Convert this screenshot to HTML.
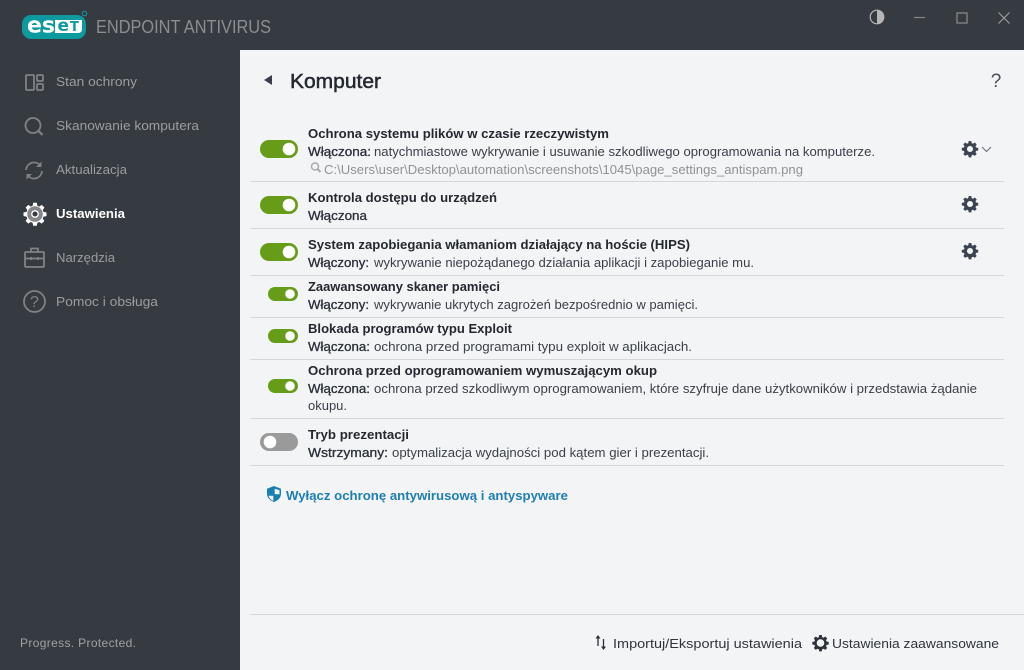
<!DOCTYPE html>
<html><head><meta charset="utf-8"><style>
html,body{margin:0;padding:0;background:#363a41;width:1024px;height:670px;overflow:hidden}
svg{display:block}
text{font-family:"Liberation Sans",sans-serif;white-space:pre}
.logo{font-family:"DejaVu Sans",sans-serif;font-weight:bold}
.n{font-size:13px;fill:#9b9da1}
.t{font-size:13px;font-weight:bold;fill:#24282f}
.d{font-size:12.5px;fill:#3b4048}
.b{font-size:12.5px;fill:#2b3038;stroke:#2b3038;stroke-width:.3}
.l{stroke:#d5d7da;stroke-width:1}
.ic{fill:none;stroke:#808286;stroke-width:1.8}
</style></head><body>
<svg width="1024" height="670" viewBox="0 0 1024 670" xmlns="http://www.w3.org/2000/svg">
<defs>
<path id="g" d="M-1.3-8h2.6l.4 2.1 1.3.6 1.8-1.2 1.9 1.9-1.2 1.8.6 1.3 2.1.4v2.6l-2.1.4-.6 1.3 1.2 1.8-1.9 1.9-1.8-1.2-1.3.6-.4 2.1h-2.6l-.4-2.1-1.3-.6-1.8 1.2-1.9-1.9 1.2-1.8-.6-1.3-2.1-.4v-2.6l2.1-.4.6-1.3-1.2-1.8 1.9-1.9 1.8 1.2 1.3-.6zM0-3a3 3 0 1 0 .01 0z" fill-rule="evenodd"/>
</defs>
<rect width="1024" height="670" fill="#363a41"/>
<rect x="240" y="50" width="784" height="620" fill="#f3f4f6"/>

<!-- logo -->
<rect x="22" y="15" width="64" height="24" rx="9" fill="#0c9a9f"/>
<path d="M55 20h27v9q0 4-4 4H55z" fill="#fff"/>
<text class="logo" x="27" y="32.500" font-size="22" fill="#fff">es</text>
<text class="logo" x="57.500" y="31" font-size="17" fill="#0c9a9f">e</text>
<text class="logo" x="70" y="31" font-size="13" fill="#0c9a9f">T</text>
<circle cx="84.500" cy="13.500" r="2.300" fill="none" stroke="#0c9a9f" stroke-width="1"/>
<text x="96" y="33" font-size="18" fill="#8b8e93" textLength="175" lengthAdjust="spacingAndGlyphs">ENDPOINT ANTIVIRUS</text>

<!-- window controls -->
<circle cx="877" cy="17" r="6.800" fill="none" stroke="#b5b6b8" stroke-width="1.200"/>
<path d="M877 10.200a6.800 6.800 0 0 1 0 13.600z" fill="#b5b6b8"/>
<path d="M914 17.500h11" stroke="#85878b" stroke-width="1.200"/>
<rect x="957" y="13" width="10" height="10" fill="none" stroke="#808286" stroke-width="1.400"/>
<path d="M998.500 12.500l11 11m0-11l-11 11" stroke="#9b9da1" stroke-width="1.200"/>

<!-- sidebar icons -->
<g class="ic">
<rect x="26" y="75" width="8" height="15" rx="1"/><rect x="37" y="75" width="6" height="6" rx="1"/><rect x="37" y="84" width="6" height="6" rx="1"/>
<circle cx="33" cy="125.500" r="7.500"/><path d="M38.500 131l4 4" stroke-width="2.200"/>
<path d="M26 170a8 8 0 0 1 14-4.800M42 171a8 8 0 0 1-14 4.800"/>
</g>
<path d="M41.500 161.500v5.500h-5.500zM26.500 179.500v-5.500h5.500z" fill="#808286"/>
<use href="#g" transform="translate(35,214) scale(1.400)" fill="#fff"/>
<circle cx="35" cy="214" r="7.800" fill="#85878b"/>
<circle cx="35" cy="214" r="3.200" fill="#363a41" stroke="#fff" stroke-width="1.300"/>
<g class="ic">
<rect x="25" y="252" width="19" height="15" rx="1"/><path d="M31 252v-3.500h7v3.500M25 258.500h19M31 257v3M38 257v3"/>
<circle cx="34.500" cy="301.500" r="10.500"/>
</g>
<text x="34.500" y="307" font-size="16" text-anchor="middle" fill="#808286">?</text>

<!-- sidebar text -->
<text class="n" x="56" y="86" textLength="81" lengthAdjust="spacingAndGlyphs">Stan ochrony</text>
<text class="n" x="56" y="130" textLength="143" lengthAdjust="spacingAndGlyphs">Skanowanie komputera</text>
<text class="n" x="56" y="174" textLength="71" lengthAdjust="spacingAndGlyphs">Aktualizacja</text>
<text x="56" y="218" font-size="13" font-weight="bold" fill="#fff" textLength="69" lengthAdjust="spacingAndGlyphs">Ustawienia</text>
<text class="n" x="56" y="262" textLength="59" lengthAdjust="spacingAndGlyphs">Narzędzia</text>
<text class="n" x="56" y="306" textLength="102" lengthAdjust="spacingAndGlyphs">Pomoc i obsługa</text>
<text x="20" y="647" font-size="12" fill="#a0a2a6" textLength="116" lengthAdjust="spacing">Progress. Protected.</text>

<!-- header -->
<path d="M264 80l8-5v10z" fill="#3b4048"/>
<text x="290" y="88" font-size="20" fill="#24282f" textLength="91" lengthAdjust="spacingAndGlyphs" style="stroke:#24282f;stroke-width:.5">Komputer</text>
<text x="996" y="87" font-size="19" text-anchor="middle" fill="#4a4f57">?</text>

<!-- row separators -->
<path class="l" d="M250 181.500h754M250 228.500h754M250 275.500h754M250 317.500h754M250 359.500h754M250 418.500h754M250 465.500h754M250 614.500h774"/>

<!-- toggles -->
<g>
<rect x="260" y="140" width="38" height="18" rx="9" fill="#669c17"/><circle cx="289" cy="149" r="6.300" fill="#fff"/>
<rect x="260" y="196" width="38" height="18" rx="9" fill="#669c17"/><circle cx="289" cy="205" r="6.300" fill="#fff"/>
<rect x="260" y="243" width="38" height="18" rx="9" fill="#669c17"/><circle cx="289" cy="252" r="6.300" fill="#fff"/>
<rect x="268" y="287" width="30" height="14" rx="7" fill="#669c17"/><circle cx="290" cy="294" r="4.800" fill="#fff"/>
<rect x="268" y="329" width="30" height="14" rx="7" fill="#669c17"/><circle cx="290" cy="336" r="4.800" fill="#fff"/>
<rect x="268" y="379" width="30" height="14" rx="7" fill="#669c17"/><circle cx="290" cy="386" r="4.800" fill="#fff"/>
<rect x="260" y="433" width="38" height="18" rx="9" fill="#9a9a9a"/><circle cx="270" cy="442" r="6.300" fill="#fff"/>
</g>

<!-- rows -->
<text class="t" x="308" y="138" textLength="301" lengthAdjust="spacingAndGlyphs">Ochrona systemu plików w czasie rzeczywistym</text>
<text class="b" x="308" y="156" textLength="63" lengthAdjust="spacingAndGlyphs">Włączona:</text>
<text class="d" x="374" y="156" textLength="501" lengthAdjust="spacingAndGlyphs">natychmiastowe wykrywanie i usuwanie szkodliwego oprogramowania na komputerze.</text>
<circle cx="315" cy="166.500" r="3.500" fill="none" stroke="#a9abae" stroke-width="1.500"/><path d="M317.500 169l3 3" stroke="#a9abae" stroke-width="2"/>
<text x="324" y="174" font-size="12.500" fill="#8f9296" textLength="479" lengthAdjust="spacingAndGlyphs">C:\Users\user\Desktop\automation\screenshots\1045\page_settings_antispam.png</text>

<text class="t" x="308" y="202" textLength="189" lengthAdjust="spacingAndGlyphs">Kontrola dostępu do urządzeń</text>
<text class="b" x="308" y="220" textLength="59" lengthAdjust="spacingAndGlyphs">Włączona</text>

<text class="t" x="308" y="249" textLength="382" lengthAdjust="spacingAndGlyphs">System zapobiegania włamaniom działający na hoście (HIPS)</text>
<text class="b" x="308" y="267" textLength="61" lengthAdjust="spacingAndGlyphs">Włączony:</text>
<text class="d" x="374" y="267" textLength="380" lengthAdjust="spacingAndGlyphs">wykrywanie niepożądanego działania aplikacji i zapobieganie mu.</text>

<text class="t" x="308" y="291" textLength="192" lengthAdjust="spacingAndGlyphs">Zaawansowany skaner pamięci</text>
<text class="b" x="308" y="309" textLength="61" lengthAdjust="spacingAndGlyphs">Włączony:</text>
<text class="d" x="374" y="309" textLength="324" lengthAdjust="spacingAndGlyphs">wykrywanie ukrytych zagrożeń bezpośrednio w pamięci.</text>

<text class="t" x="308" y="333" textLength="204" lengthAdjust="spacingAndGlyphs">Blokada programów typu Exploit</text>
<text class="b" x="308" y="351" textLength="62" lengthAdjust="spacingAndGlyphs">Włączona:</text>
<text class="d" x="374" y="351" textLength="318" lengthAdjust="spacingAndGlyphs">ochrona przed programami typu exploit w aplikacjach.</text>

<text class="t" x="308" y="375" textLength="349" lengthAdjust="spacingAndGlyphs">Ochrona przed oprogramowaniem wymuszającym okup</text>
<text class="b" x="308" y="393" textLength="62" lengthAdjust="spacingAndGlyphs">Włączona:</text>
<text class="d" x="374" y="393" textLength="603" lengthAdjust="spacingAndGlyphs">ochrona przed szkodliwym oprogramowaniem, które szyfruje dane użytkowników i przedstawia żądanie</text>
<text class="d" x="308" y="410" textLength="39" lengthAdjust="spacingAndGlyphs">okupu.</text>

<text class="t" x="308" y="439" textLength="101" lengthAdjust="spacingAndGlyphs">Tryb prezentacji</text>
<text class="b" x="308" y="457" textLength="80" lengthAdjust="spacingAndGlyphs">Wstrzymany:</text>
<text class="d" x="392" y="457" textLength="317" lengthAdjust="spacingAndGlyphs">optymalizacja wydajności pod kątem gier i prezentacji.</text>

<!-- gears -->
<g fill="#3b4450">
<use href="#g" x="970" y="149"/><use href="#g" x="970" y="204"/><use href="#g" x="970" y="251"/>
</g>
<path d="M982 147l4.500 4.500 4.500-4.500" fill="none" stroke="#6b7078" stroke-width="1.100"/>

<!-- link -->
<path d="M274 486l7 2.700v5c0 3.800-2.900 6.700-7 8.300-4.100-1.600-7-4.500-7-8.300v-5z" fill="#1a7fb0"/>
<path d="M274.700 488.800l4.800 1.500v4h-4.800zM273.300 495.700v5.200c-2.400-1-4.200-2.800-4.700-5.200z" fill="#f3f4f6"/>
<text x="286" y="500" font-size="13" font-weight="bold" fill="#1f7fb0" textLength="282" lengthAdjust="spacingAndGlyphs">Wyłącz ochronę antywirusową i antyspyware</text>

<!-- footer -->
<path d="M598 637v9M603.500 639v9" fill="none" stroke="#2b3038" stroke-width="1.300"/>
<path d="M595.500 638.500l2.500-3.500 2.500 3.500zM601 646.500l2.500 3.500 2.500-3.500z" fill="#2b3038"/>
<text x="613" y="648" font-size="13" fill="#2f343c" textLength="189" lengthAdjust="spacingAndGlyphs">Importuj/Eksportuj ustawienia</text>
<use href="#g" x="820.500" y="643" fill="#2f343c"/>
<circle cx="820.500" cy="643" r="3.800" fill="#f3f4f6"/>
<text x="832" y="648" font-size="13" fill="#2f343c" textLength="167" lengthAdjust="spacingAndGlyphs">Ustawienia zaawansowane</text>
</svg>
</body></html>
